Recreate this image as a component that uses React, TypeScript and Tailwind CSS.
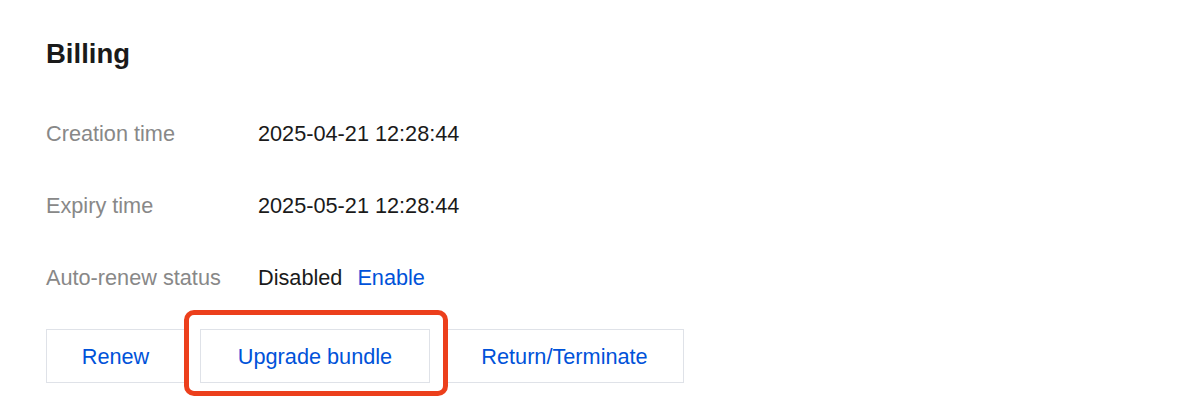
import React from "react";

export default function App() {
  const rows: { label: string; value: React.ReactNode }[] = [
    { label: "Creation time", value: "2025-04-21 12:28:44" },
    { label: "Expiry time", value: "2025-05-21 12:28:44" },
    {
      label: "Auto-renew status",
      value: (
        <span className="flex items-center gap-[15px]">
          <span>Disabled</span>
          <span className="text-[#0052d9]">Enable</span>
        </span>
      ),
    },
  ];
  return (
    <div
      className="w-[1182px] h-[412px] bg-white pl-[46px] pt-[40px] overflow-hidden"
      style={{ fontFamily: '"Liberation Sans", Arial, Helvetica, sans-serif' }}
    >
      <h2 className="text-[27.5px] leading-[28px] font-bold text-[#1a1a1a]">Billing</h2>
      <div className="mt-[30px] flex flex-col">
        {rows.map((r) => (
          <div key={r.label} className="flex h-[72px] items-center text-[21.7px] leading-none">
            <div className="w-[212px] text-[#888888]">{r.label}</div>
            <div className="text-[#1a1a1a]">{r.value}</div>
          </div>
        ))}
      </div>
      <div className="mt-[15px] flex gap-[15px] text-[21.7px] leading-none text-[#0052d9]">
        <button className="h-[54px] w-[139px] border border-[#dfe2e8] bg-white pt-[2px]">Renew</button>
        <div className="relative">
          <button className="h-[54px] w-[230px] border border-[#dfe2e8] bg-white pt-[2px]">Upgrade bundle</button>
          <div className="pointer-events-none absolute left-[-16px] top-[-19px] h-[86px] w-[264px] rounded-[10px] border-[5px] border-[#ec3f1c]" />
        </div>
        <button className="h-[54px] w-[239px] border border-[#dfe2e8] bg-white pt-[2px]">Return/Terminate</button>
      </div>
    </div>
  );
}
